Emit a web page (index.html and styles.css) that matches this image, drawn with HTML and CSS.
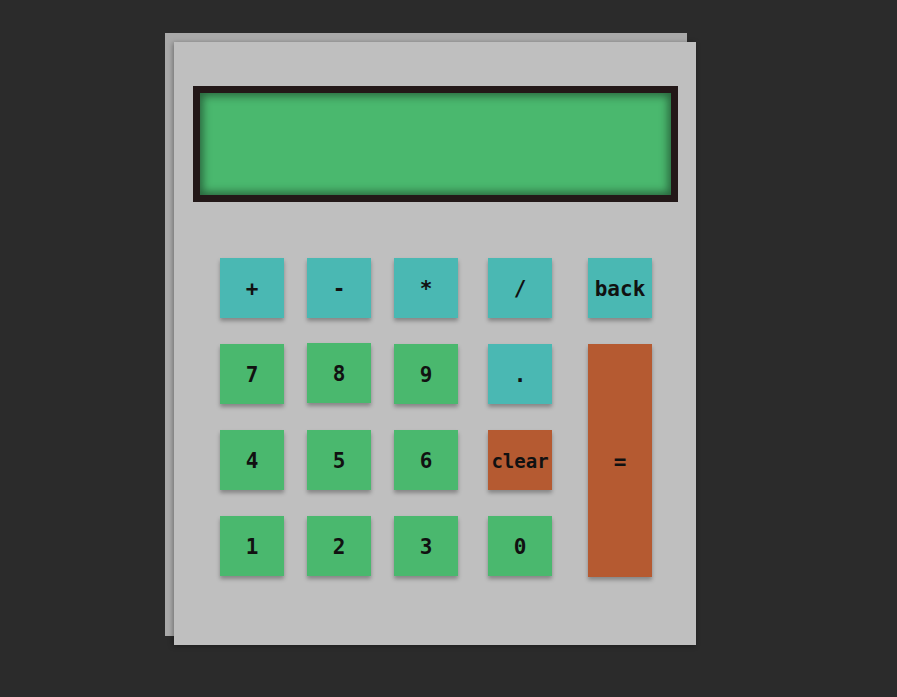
FILE: index.html
```html
<!DOCTYPE html>
<html>
<head>
<meta charset="utf-8">
<link rel="stylesheet" href="styles.css">
</head>
<body>
<div class="stack">
  <div class="calc">
    <div class="display"><div class="screen"></div></div>
    <div class="keys">
      <div class="key op">+</div>
      <div class="key op">-</div>
      <div class="key op">*</div>
      <div class="key op">/</div>
      <div class="key op">back</div>
      <div class="key num">7</div>
      <div class="key num up">8</div>
      <div class="key num">9</div>
      <div class="key op">.</div>
      <div class="key eq">=</div>
      <div class="key num">4</div>
      <div class="key num">5</div>
      <div class="key num">6</div>
      <div class="key clr">clear</div>
      <div class="key num">1</div>
      <div class="key num">2</div>
      <div class="key num">3</div>
      <div class="key num">0</div>
    </div>
  </div>
</div>
</body>
</html>
```

FILE: styles.css
```css
html, body { margin: 0; padding: 0; }
body {
  background: #2b2b2b;
  width: 897px;
  height: 697px;
  overflow: hidden;
  font-family: "DejaVu Sans Mono", "Liberation Mono", monospace;
}
.stack {
  margin: 33px 0 0 165px;
  width: 522px;
  height: 603px;
  background: #a9a9a9;
}
.calc {
  position: relative;
  left: 9px;
  top: 9px;
  width: 522px;
  height: 603px;
  background: #bfbfbf;
  box-shadow: -1px 1px 5px rgba(0,0,0,0.35);
  padding: 44px 0 0 19px;
  box-sizing: border-box;
}
.display {
  width: 485px;
  height: 116px;
  box-sizing: border-box;
  background: #231818;
  padding: 7px;
}
.screen {
  width: 100%;
  height: 100%;
  background: #4ab86e;
  box-shadow: inset 0 0 9px 3px rgba(0,0,0,0.45);
}
.keys {
  margin: 56px 0 0 27px;
  display: grid;
  grid-template-columns: 87px 87px 94px 100px 64px;
  grid-template-rows: 60px 60px 60px 60px;
  row-gap: 26px;
}
.key {
  width: 64px;
  height: 60px;
  box-sizing: border-box;
  padding-top: 2px;
  display: flex;
  align-items: center;
  justify-content: center;
  font-weight: bold;
  font-size: 21px;
  color: #111;
  box-shadow: 0 3px 4px rgba(0,0,0,0.3);
}
.op { background: #4ab8b3; }
.num { background: #4ab86e; }
.clr { background: #b55a31; font-size: 19px; }
.eq {
  background: #b55a31;
  grid-column: 5;
  grid-row: 2 / span 3;
  height: 233px;
}
.up { margin-top: -1px; }
```
